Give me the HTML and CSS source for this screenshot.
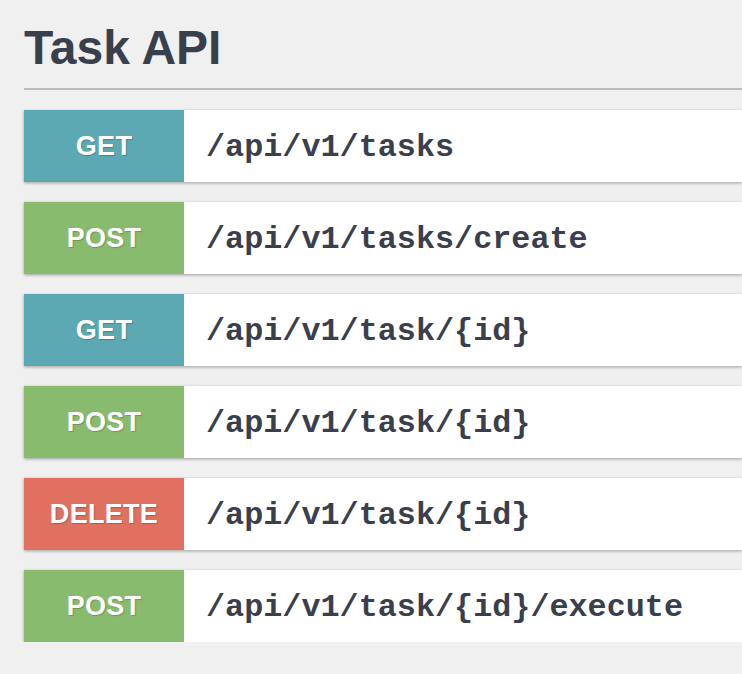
FILE: index.html
```html
<!DOCTYPE html>
<html>
<head>
<meta charset="utf-8">
<link rel="stylesheet" href="styles.css">
</head>
<body>
<div class="page">
  <h1 class="title">Task API</h1>
  <div class="rule"></div>
  <div class="endpoints">
    <div class="endpoint"><span class="method get">GET</span><span class="path">/api/v1/tasks</span></div>
    <div class="endpoint"><span class="method post">POST</span><span class="path">/api/v1/tasks/create</span></div>
    <div class="endpoint"><span class="method get">GET</span><span class="path">/api/v1/task/{id}</span></div>
    <div class="endpoint"><span class="method post">POST</span><span class="path">/api/v1/task/{id}</span></div>
    <div class="endpoint"><span class="method delete">DELETE</span><span class="path">/api/v1/task/{id}</span></div>
    <div class="endpoint"><span class="method post">POST</span><span class="path">/api/v1/task/{id}/execute</span></div>
  </div>
</div>
</body>
</html>
```
FILE: styles.css
```css
html, body {
  margin: 0;
  padding: 0;
  background: #f0f0f0;
  overflow: hidden;
}
.page {
  padding: 20px 0 0 24px;
  font-family: "Liberation Sans", Arial, sans-serif;
  color: #393f4d;
}
.title {
  margin: 0;
  font-size: 48px;
  line-height: 56px;
  font-weight: bold;
  color: #393f4d;
}
.rule {
  height: 2px;
  background: #bbbbbf;
  margin-top: 12px;
}
.endpoints {
  display: flex;
  flex-direction: column;
  gap: 20px;
  margin-top: 20px;
}
.endpoint {
  display: flex;
  height: 72px;
  background: #ffffff;
  box-shadow: 0 1px 3px rgba(0, 0, 0, 0.35);
}
.method {
  flex: 0 0 160px;
  display: flex;
  align-items: center;
  justify-content: center;
  color: #ffffff;
  font-weight: bold;
  font-size: 27px;
  letter-spacing: 0.3px;
  text-shadow: 1px 1px 1px rgba(0, 0, 0, 0.2);
}
.get { background: #5ca8b3; }
.post { background: #88bb6e; }
.delete { background: #e07060; }
.path {
  display: flex;
  align-items: center;
  padding-left: 22px;
  padding-top: 3px;
  white-space: nowrap;
  font-family: "Liberation Mono", "Courier New", monospace;
  font-weight: bold;
  font-size: 31.8px;
  color: #393f4d;
}
```
